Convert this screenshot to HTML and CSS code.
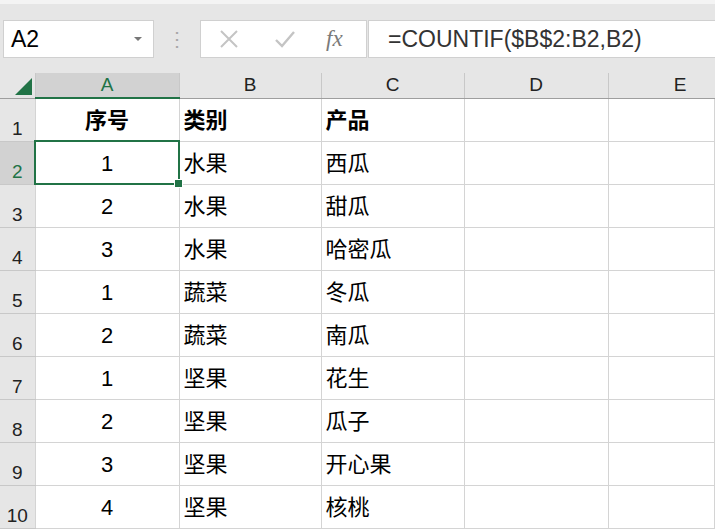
FILE: index.html
```html
<!DOCTYPE html>
<html lang="zh-CN">
<head>
    <meta charset="UTF-8">
    <title>COUNTIF</title>
    <link rel="stylesheet" href="styles.css">
</head>
<body>
    <div class="formula-bar">
        <div class="name-box">
            <span>A2</span>
            <span class="arrow"></span>
        </div>
        <div class="grip">⋮</div>
        <div class="fx-buttons">
            <svg width="22" height="22" viewBox="0 0 22 22"><path d="M3 3 L19 19 M19 3 L3 19" stroke="#c4c4c4" stroke-width="2" fill="none"/></svg>
            <svg width="22" height="22" viewBox="0 0 22 22"><path d="M2 12 L8 18 L20 4" stroke="#c4c4c4" stroke-width="2.4" fill="none"/></svg>
            <span class="fx">fx</span>
        </div>
        <div class="formula">=COUNTIF($B$2:B2,B2)</div>
    </div>

    <table class="sheet">
        <colgroup>
            <col class="col-head">
            <col class="col-a">
            <col class="col-b">
            <col class="col-c">
            <col class="col-d">
            <col>
        </colgroup>
        <tr class="heads">
            <th class="corner"><span class="tri"></span></th>
            <th class="active">A</th>
            <th>B</th>
            <th>C</th>
            <th>D</th>
            <th class="cut">E</th>
        </tr>
        <tr>
            <th class="row-num">1</th>
            <td class="num bold">序号</td><td class="bold">类别</td><td class="bold">产品</td><td></td><td></td>
        </tr>
        <tr>
            <th class="row-num active">2</th>
            <td class="num selected">1<span class="handle"></span></td><td>水果</td><td>西瓜</td><td></td><td></td>
        </tr>
        <tr>
            <th class="row-num">3</th>
            <td class="num">2</td><td>水果</td><td>甜瓜</td><td></td><td></td>
        </tr>
        <tr>
            <th class="row-num">4</th>
            <td class="num">3</td><td>水果</td><td>哈密瓜</td><td></td><td></td>
        </tr>
        <tr>
            <th class="row-num">5</th>
            <td class="num">1</td><td>蔬菜</td><td>冬瓜</td><td></td><td></td>
        </tr>
        <tr>
            <th class="row-num">6</th>
            <td class="num">2</td><td>蔬菜</td><td>南瓜</td><td></td><td></td>
        </tr>
        <tr>
            <th class="row-num">7</th>
            <td class="num">1</td><td>坚果</td><td>花生</td><td></td><td></td>
        </tr>
        <tr>
            <th class="row-num">8</th>
            <td class="num">2</td><td>坚果</td><td>瓜子</td><td></td><td></td>
        </tr>
        <tr>
            <th class="row-num">9</th>
            <td class="num">3</td><td>坚果</td><td>开心果</td><td></td><td></td>
        </tr>
        <tr>
            <th class="row-num">10</th>
            <td class="num">4</td><td>坚果</td><td>核桃</td><td></td><td></td>
        </tr>
    </table>
</body>
</html>
```

FILE: styles.css
```css
body {
    margin: 0;
    background-color: #e6e6e6;
    font-family: "Liberation Sans", "Noto Sans CJK SC", sans-serif;
    color: #000000;
    overflow: hidden;
}
.formula-bar {
    height: 73px;
    display: flex;
    align-items: flex-start;
    padding-top: 20px;
    box-sizing: border-box;
    border-top: 4px solid #f4f4f4;
}
.name-box {
    margin-top: -4px;
    margin-left: 3px;
    width: 151px;
    height: 38px;
    box-sizing: border-box;
    background-color: #ffffff;
    border: 1px solid #d0d0d0;
    display: flex;
    align-items: center;
    justify-content: space-between;
    padding: 0 11px 0 7px;
    font-size: 23px;
}
.arrow {
    width: 0;
    height: 0;
    border-left: 4px solid transparent;
    border-right: 4px solid transparent;
    border-top: 4px solid #777777;
}
.grip {
    margin-top: -4px;
    width: 46px;
    height: 38px;
    line-height: 38px;
    text-align: center;
    color: #a8a8a8;
    font-size: 20px;
}
.fx-buttons {
    margin-top: -4px;
    width: 167px;
    height: 38px;
    box-sizing: border-box;
    background-color: #ffffff;
    border: 1px solid #d0d0d0;
    display: flex;
    align-items: center;
    gap: 34px;
    padding-left: 17px;
}
.fx {
    font-family: "Liberation Serif", serif;
    font-style: italic;
    font-size: 23px;
    color: #7a7a7a;
    margin-left: -4px;
}
.formula {
    margin-top: -4px;
    margin-left: 1px;
    flex: 1;
    height: 38px;
    box-sizing: border-box;
    background-color: #ffffff;
    border: 1px solid #d0d0d0;
    border-right: none;
    padding-left: 19px;
    line-height: 36px;
    font-size: 23px;
    color: #333333;
}
.sheet {
    border-collapse: collapse;
    table-layout: fixed;
    width: 715px;
    background-color: #ffffff;
}
.sheet tr { height: 43px; }
.sheet tr.heads { height: 25px; }
.col-head { width: 35px; }
.col-a { width: 144px; }
.col-b { width: 142px; }
.col-c { width: 143px; }
.col-d { width: 144px; }
.heads th {
    padding: 0;
    background-color: #e6e6e6;
    border-left: 1px solid #c8c8c8;
    border-bottom: 1px solid #9e9e9e;
    font-weight: normal;
    font-size: 19px;
    line-height: 22px;
    color: #222222;
}
.heads th.cut {
    padding-left: 37px; /* column E runs past the window */
}
.heads th.corner {
    border-left: none;
    position: relative;
}
.tri {
    position: absolute;
    right: 3px;
    bottom: 3px;
    width: 0;
    height: 0;
    border-left: 17px solid transparent;
    border-bottom: 17px solid #217346;
}
.heads th.active {
    background-color: #d2d2d2;
    color: #217346;
    border-bottom: 2px solid #217346;
}
.row-num {
    padding: 0 0 1px;
    background-color: #e6e6e6;
    border-bottom: 1px solid #c8c8c8;
    font-weight: normal;
    font-size: 19px;
    line-height: 22px;
    vertical-align: bottom;
    text-align: center;
    color: #222222;
}
.row-num.active {
    background-color: #d2d2d2;
    color: #217346;
}
td {
    padding: 0 4px 7px;
    border: 1px solid #d4d4d4;
    font-size: 22px;
    line-height: 26px;
    vertical-align: bottom;
    white-space: nowrap;
}
td.num { text-align: center; }
td.bold { font-weight: bold; }
td.selected {
    position: relative;
    outline: 2px solid #217346;
    outline-offset: -1px;
}
.handle {
    position: absolute;
    right: -4px;
    bottom: -4px;
    width: 7px;
    height: 7px;
    background-color: #217346;
    border: 1px solid #ffffff;
}
```
